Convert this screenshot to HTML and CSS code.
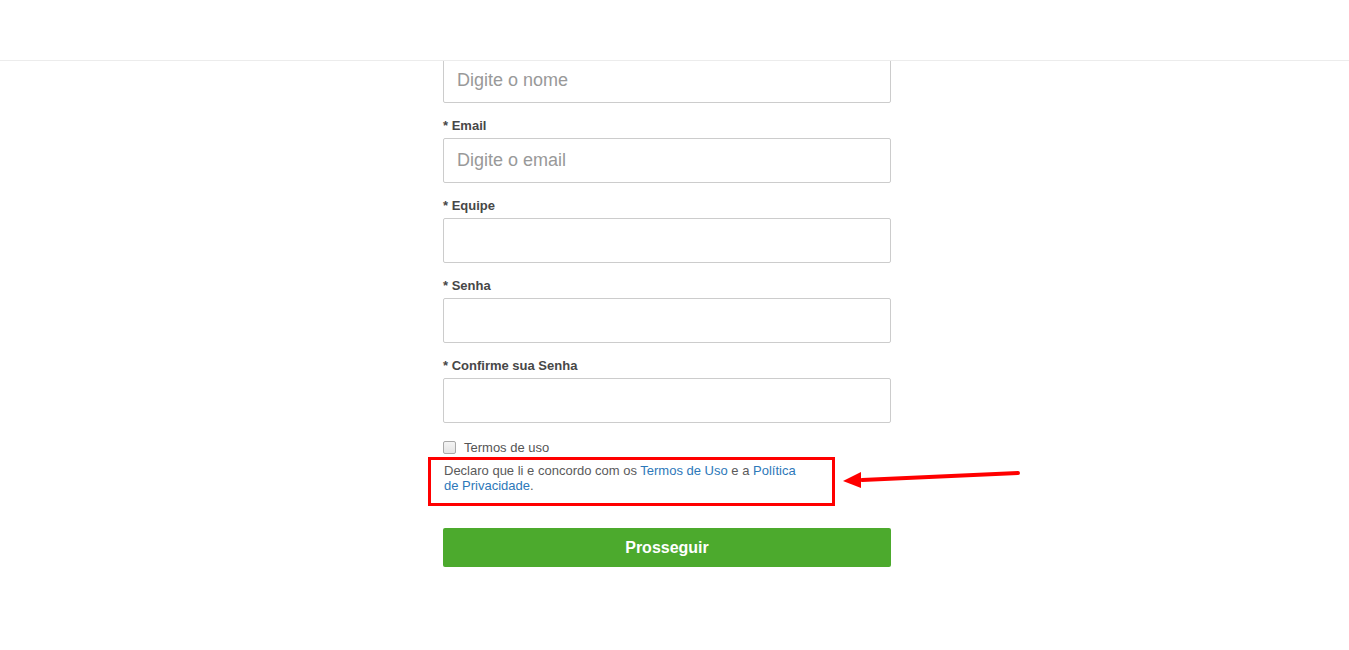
FILE: index.html
```html
<!DOCTYPE html>
<html lang="pt">
<head>
<meta charset="utf-8">
<title>Cadastro</title>
<link rel="stylesheet" href="styles.css">
</head>
<body>
<header class="topbar"></header>
<main class="wrap">
  <form class="form">
    <div class="group first">
      <input class="field" type="text" placeholder="Digite o nome">
    </div>
    <div class="group">
      <label class="lbl">* Email</label>
      <input class="field" type="text" placeholder="Digite o email">
    </div>
    <div class="group">
      <label class="lbl">* Equipe</label>
      <input class="field" type="text">
    </div>
    <div class="group">
      <label class="lbl">* Senha</label>
      <input class="field" type="password">
    </div>
    <div class="group">
      <label class="lbl">* Confirme sua Senha</label>
      <input class="field" type="password">
    </div>
    <div class="terms">
      <label class="check"><span class="box"></span><span>Termos de uso</span></label>
      <p class="declare">Declaro que li e concordo com os <a href="#">Termos de Uso</a> e a <a href="#">Política de Privacidade</a>.</p>
      <div class="highlight"></div>
    </div>
    <button class="submit" type="button">Prosseguir</button>
  </form>
</main>
<svg class="arrow" width="180" height="30" viewBox="0 0 180 30">
  <line x1="176" y1="6" x2="20" y2="13" stroke="#ff0000" stroke-width="4" stroke-linecap="round"/>
  <polygon points="1,14 19,5 19,21" fill="#ff0000"/>
</svg>
</body>
</html>
```
FILE: styles.css
```css
* { box-sizing: border-box; }
html, body { margin: 0; padding: 0; background: #fff; }
body {
  font-family: "Liberation Sans", Arial, sans-serif;
  color: #555;
  position: relative;
  min-height: 650px;
}
.topbar {
  position: fixed;
  top: 0; left: 0; right: 0;
  height: 61px;
  background: #fff;
  border-bottom: 1px solid #ececec;
  z-index: 10;
}
.wrap {
  width: 463px;
  margin: 0 auto;
  padding-right: 15px;
  padding-top: 58px;
}
.form { display: flex; flex-direction: column; }
.group { display: flex; flex-direction: column; margin-bottom: 15px; }
.lbl {
  font-size: 13px;
  font-weight: bold;
  line-height: 15px;
  margin-bottom: 5px;
  color: #474747;
}
.field {
  width: 448px;
  height: 45px;
  border: 1px solid #ccc;
  border-radius: 2px;
  padding: 0 13px;
  font-family: "Liberation Sans", Arial, sans-serif;
  font-size: 18px;
  color: #555;
  outline: none;
}
.field::placeholder { color: #999; }
.terms { position: relative; margin-top: -1px; }
.check {
  display: flex;
  align-items: center;
  height: 20px;
  font-size: 13px;
  color: #555;
}
.box {
  width: 13px;
  height: 13px;
  border: 1px solid #a9a9a9;
  border-radius: 2px;
  background: linear-gradient(#f4f4f4, #e4e4e4);
  margin-right: 8px;
}
.declare {
  margin: 6px 0 0 1px;
  width: 360px;
  font-size: 13px;
  line-height: 15px;
  color: #5a5a5a;
}
.declare a { color: #2d78b9; text-decoration: none; }
.highlight {
  position: absolute;
  left: -15px;
  top: 20px;
  width: 407px;
  height: 49px;
  border: 3px solid #ff0000;
}
.submit {
  margin-top: 35px;
  width: 448px;
  height: 39px;
  border: none;
  border-radius: 2px;
  background: #4caa2d;
  color: #fff;
  font-family: "Liberation Sans", Arial, sans-serif;
  font-size: 16px;
  font-weight: bold;
}
.arrow {
  position: absolute;
  left: 842px;
  top: 467px;
}
```
